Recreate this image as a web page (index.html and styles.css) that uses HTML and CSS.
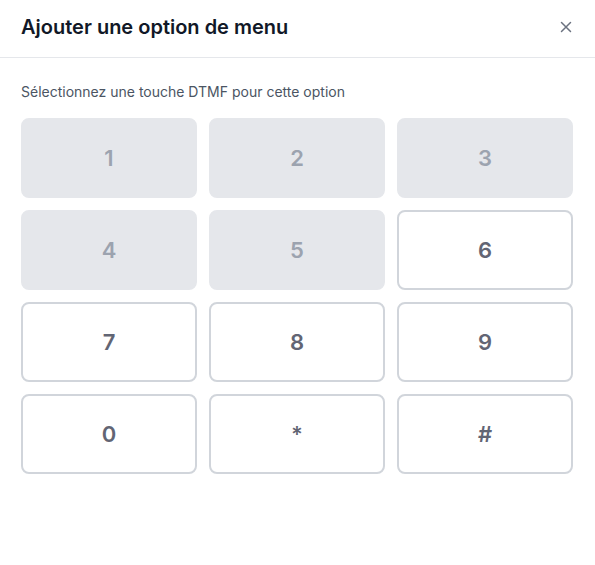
FILE: index.html
```html
<!DOCTYPE html>
<html lang="fr">
<head>
<meta charset="utf-8">
<title>Ajouter une option de menu</title>
<link rel="stylesheet" href="styles.css">
</head>
<body>
<div class="dialog">
  <header class="dialog-header">
    <h2 class="dialog-title">Ajouter une option de menu</h2>
    <button class="close-btn" aria-label="Fermer">
      <svg width="12" height="12" viewBox="0 0 12 12"><path d="M1.5 1.5 L10.5 10.5 M10.5 1.5 L1.5 10.5" stroke="currentColor" stroke-width="1.5" stroke-linecap="round"/></svg>
    </button>
  </header>
  <div class="dialog-body">
    <p class="hint">Sélectionnez une touche DTMF pour cette option</p>
    <div class="keypad">
      <button class="key used" disabled>1</button>
      <button class="key used" disabled>2</button>
      <button class="key used" disabled>3</button>
      <button class="key used" disabled>4</button>
      <button class="key used" disabled>5</button>
      <button class="key">6</button>
      <button class="key">7</button>
      <button class="key">8</button>
      <button class="key">9</button>
      <button class="key">0</button>
      <button class="key">*</button>
      <button class="key">#</button>
    </div>
  </div>
</div>
</body>
</html>
```
FILE: styles.css
```css
* { box-sizing: border-box; }
html, body { margin: 0; padding: 0; background: #ffffff; }
body { font-family: Inter, "Noto Sans", sans-serif; width: 595px; height: 565px; }
.dialog { width: 595px; }
.dialog-header {
  display: flex;
  align-items: center;
  justify-content: space-between;
  height: 58px;
  padding: 0 22px 3px 21px;
  border-bottom: 1px solid #e5e7eb;
}
.dialog-title {
  margin: 0;
  font-size: 20px;
  font-weight: 600;
  color: #111827;
  line-height: 28px;
}
.close-btn {
  border: 0;
  background: none;
  padding: 0;
  color: #6b7280;
  display: flex;
  width: 12px;
  height: 12px;
  margin-right: 1px;
}
.dialog-body { padding: 24px 22px 24px 21px; }
.hint {
  margin: 0 0 16px;
  font-size: 14px;
  line-height: 20px;
  color: #4b5563;
}
.keypad {
  display: grid;
  grid-template-columns: repeat(3, 176px);
  grid-auto-rows: 80px;
  gap: 12px;
}
.key {
  font-family: Inter, "Noto Sans", sans-serif;
  font-size: 22px;
  font-weight: 600;
  color: #626574;
  background: #ffffff;
  border: 2px solid #d1d5db;
  border-radius: 8px;
  padding: 0;
}
.key.used {
  background: #e5e7eb;
  border-color: #e5e7eb;
  color: #9ca3af;
}
```
